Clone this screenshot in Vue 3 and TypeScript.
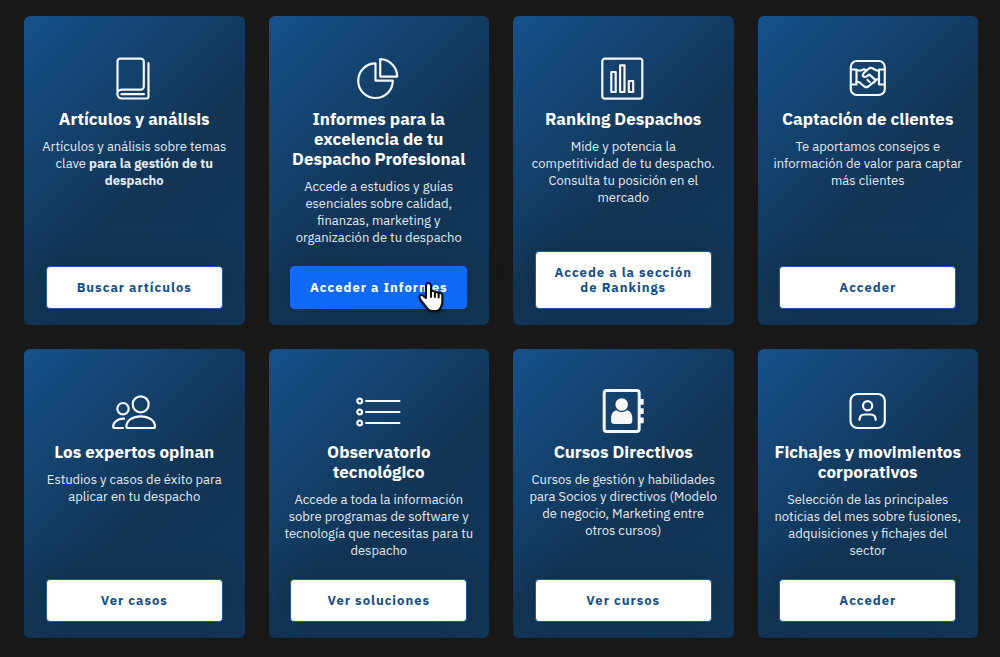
<script setup lang="ts">
type Icon = 'book' | 'pie' | 'bars' | 'handshake' | 'people' | 'list' | 'contacts' | 'profile'

interface Card {
  icon: Icon
  title: string
  text: string
  strong?: string
  action: string
  hovered?: boolean
}

const cards: Card[] = [
  { icon: 'book', title: 'Artículos y análisis', text: 'Artículos y análisis sobre temas clave', strong: 'para la gestión de tu despacho', action: 'Buscar artículos' },
  { icon: 'pie', title: 'Informes para la excelencia de tu Despacho Profesional', text: 'Accede a estudios y guías esenciales sobre calidad, finanzas, marketing y organización de tu despacho', action: 'Acceder a Informes', hovered: true },
  { icon: 'bars', title: 'Ranking Despachos', text: 'Mide y potencia la competitividad de tu despacho. Consulta tu posición en el mercado', action: 'Accede a la sección de Rankings' },
  { icon: 'handshake', title: 'Captación de clientes', text: 'Te aportamos consejos e información de valor para captar más clientes', action: 'Acceder' },
  { icon: 'people', title: 'Los expertos opinan', text: 'Estudios y casos de éxito para aplicar en tu despacho', action: 'Ver casos' },
  { icon: 'list', title: 'Observatorio tecnológico', text: 'Accede a toda la información sobre programas de software y tecnología que necesitas para tu despacho', action: 'Ver soluciones' },
  { icon: 'contacts', title: 'Cursos Directivos', text: 'Cursos de gestión y habilidades para Socios y directivos (Modelo de negocio, Marketing entre otros cursos)', action: 'Ver cursos' },
  { icon: 'profile', title: 'Fichajes y movimientos corporativos', text: 'Selección de las principales noticias del mes sobre fusiones, adquisiciones y fichajes del sector', action: 'Acceder' },
]
</script>

<template>
  <main class="grid">
    <article v-for="card in cards" :key="card.title" class="card">
      <svg class="icon" viewBox="0 0 44 44" aria-hidden="true">
        <g v-if="card.icon === 'book'">
          <path d="M5.5 38V5.7a3 3 0 0 1 3-3h20.300a3 3 0 0 1 3 3v25a3 3 0 0 1-3 3H9.800a4.400 4.400 0 0 0 0 8.800h24.700a2 2 0 0 0 2-2V7" />
          <path d="M9.500 38.200H32" />
        </g>
        <g v-else-if="card.icon === 'pie'">
          <path d="M18.500 7.400A17.300 17.300 0 1 0 35.800 24.700H18.500Z" />
          <path d="M23.200 3.200A17.300 17.300 0 0 1 40.200 20.600H23.200Z" />
        </g>
        <g v-else-if="card.icon === 'bars'">
          <rect x="1.300" y="2.700" width="40" height="40" rx="2.500" />
          <path d="M10.300 16h4.400v20h-4.400ZM19.100 9.300h4.400V36h-4.400ZM27.800 25h4.400v11h-4.400Z" />
        </g>
        <g v-else-if="card.icon === 'handshake'">
          <rect x="4.800" y="5" width="34" height="34" rx="6" />
          <path d="M5 13.500h5.500v15H5M38.600 13.500H33v15h5.600" />
          <path d="M10.500 14.500h4.500l3-1.200 2.500 1M33 14.500h-2.500l-4-2.200q-2-.8-3.800.4l-5.200 4.600q-1.700 2.200.4 3.400 2.200.8 4.200-1.500l1.200-.6 4.700 4q1.800 2-.2 3.600l-5.500 4.300q-2 1.400-4 0l-5.300-4.500H10.500M28 26.500l2.500-3.200H33M21.500 24l2.300 2" />
        </g>
        <g v-else-if="card.icon === 'people'">
          <circle cx="28.700" cy="15.300" r="8" />
          <circle cx="11" cy="19.700" r="5.700" />
          <path d="M14.400 37.500c0-6 6.300-10.200 14.300-10.200S43 31.500 43 37.500q0 1.500-1.500 1.500H16q-1.600 0-1.600-1.500Z" />
          <path d="M12 29.600C6 29.400 1.200 33 1.200 37.500q0 1.500 1.500 1.500H11" />
        </g>
        <g v-else-if="card.icon === 'list'">
          <circle cx="2.700" cy="12" r="2.400" />
          <circle cx="2.700" cy="23" r="2.400" />
          <circle cx="2.700" cy="34" r="2.400" />
          <path d="M9 12h33.500M9 23h33.500M9 34h33.500" />
        </g>
        <g v-else-if="card.icon === 'contacts'">
          <rect class="thick" x="3.200" y="1.600" width="35" height="41" rx="2.500" />
          <path class="fill" d="M38 10h4.700v5.700H38ZM38 19.300h4.700V25H38ZM38 28.500h4.700v5.700H38Z" />
          <path class="fill" d="M15.300 21.200q5.400 3.800 10.800 0 5.200 1.600 5.200 8.300v2.300q0 3.200-3.200 3.200H13.300q-3.200 0-3.200-3.200v-2.300q0-6.700 5.200-8.300Z" />
          <circle class="fill" cx="20.700" cy="15.500" r="6.300" />
        </g>
        <g v-else>
          <rect x="4.500" y="5" width="34.300" height="34" rx="7" />
          <circle cx="21.600" cy="16.700" r="4.600" />
          <path d="M13.500 30.800q.2-5.300 5-5.300h6.200q4.800 0 5 5.300" />
        </g>
      </svg>
      <h2 class="title">{{ card.title }}</h2>
      <p class="text">{{ card.text }}<template v-if="card.strong">{{ ' ' }}<strong>{{ card.strong }}</strong></template></p>
      <a href="#" class="action" :class="{ hovered: card.hovered }">
        {{ card.action }}
        <svg v-if="card.hovered" class="pointer" viewBox="0 0 26 32" aria-hidden="true">
          <path d="M8 17V4.500a2.500 2.500 0 0 1 5 0v6a2.300 2.300 0 0 1 3.900 1 2.300 2.300 0 0 1 3.700 1.200 2.200 2.200 0 0 1 3.700 1.900v6.400c0 3.200-1.300 4.700-2.300 6.700-.8 1.700-2 2.300-4.500 2.300h-3c-2.500 0-3.900-.7-5.200-2.700L3 19.500c-1.100-1.900-2.200-3.700-1.200-4.700 1.300-1.300 3.200-.4 4.500.9Z" />
          <path d="M13 10.500V16M16.900 11.500V16M20.600 12.700V16.500" />
        </svg>
      </a>
    </article>
  </main>
</template>

<style>
body {
  background: #191919;
}
</style>

<style scoped>
.grid {
  display: grid;
  grid-template-columns: repeat(4, minmax(0, 1fr));
  gap: 24px;
  padding: 16px 22px 19px 24px;
  font-family: "IBM Plex Sans", Roboto, "Noto Sans", sans-serif;
}

.card {
  display: flex;
  flex-direction: column;
  align-items: center;
  padding: 40px 14px 16px;
  border-radius: 6px;
  background: linear-gradient(135deg, #17518c 0%, #14436f 28%, #123556 54%, #123657 100%);
  color: #fff;
  text-align: center;
}

.icon {
  width: 44px;
  height: 44px;
  overflow: visible;
  fill: none;
  stroke: #f4f6f8;
  stroke-width: 2.2;
  stroke-linecap: round;
  stroke-linejoin: round;
}

.icon .thick {
  stroke-width: 3;
}

.icon .fill {
  fill: #f4f6f8;
  stroke: none;
}

.title {
  margin: 9px 0;
  font-size: 17px;
  line-height: 20px;
  font-weight: 700;
}

.text {
  margin: 0 0 20px;
  font-size: 13px;
  line-height: 17px;
  color: #e3eaf1;
}

.action {
  position: relative;
  box-sizing: border-box;
  width: 92%;
  margin-top: auto;
  padding: 13px 16px;
  border: 1px solid #1b5ca8;
  border-radius: 4px;
  background: #fff;
  box-shadow: 0 0 32px rgba(20, 25, 35, 0.35);
  color: #144f8b;
  font-size: 13px;
  line-height: 15px;
  font-weight: 700;
  letter-spacing: 1px;
  text-decoration: none;
}

.hovered {
  border-color: #1169f7;
  background: #1169f7;
  color: #fff;
}

.pointer {
  position: absolute;
  right: 22px;
  bottom: -5px;
  width: 26px;
  height: 32px;
  fill: #fff;
  stroke: #111;
  stroke-width: 2;
  stroke-linecap: round;
  stroke-linejoin: round;
  filter: drop-shadow(0 1px 1px rgba(0, 0, 0, 0.4));
}
</style>
